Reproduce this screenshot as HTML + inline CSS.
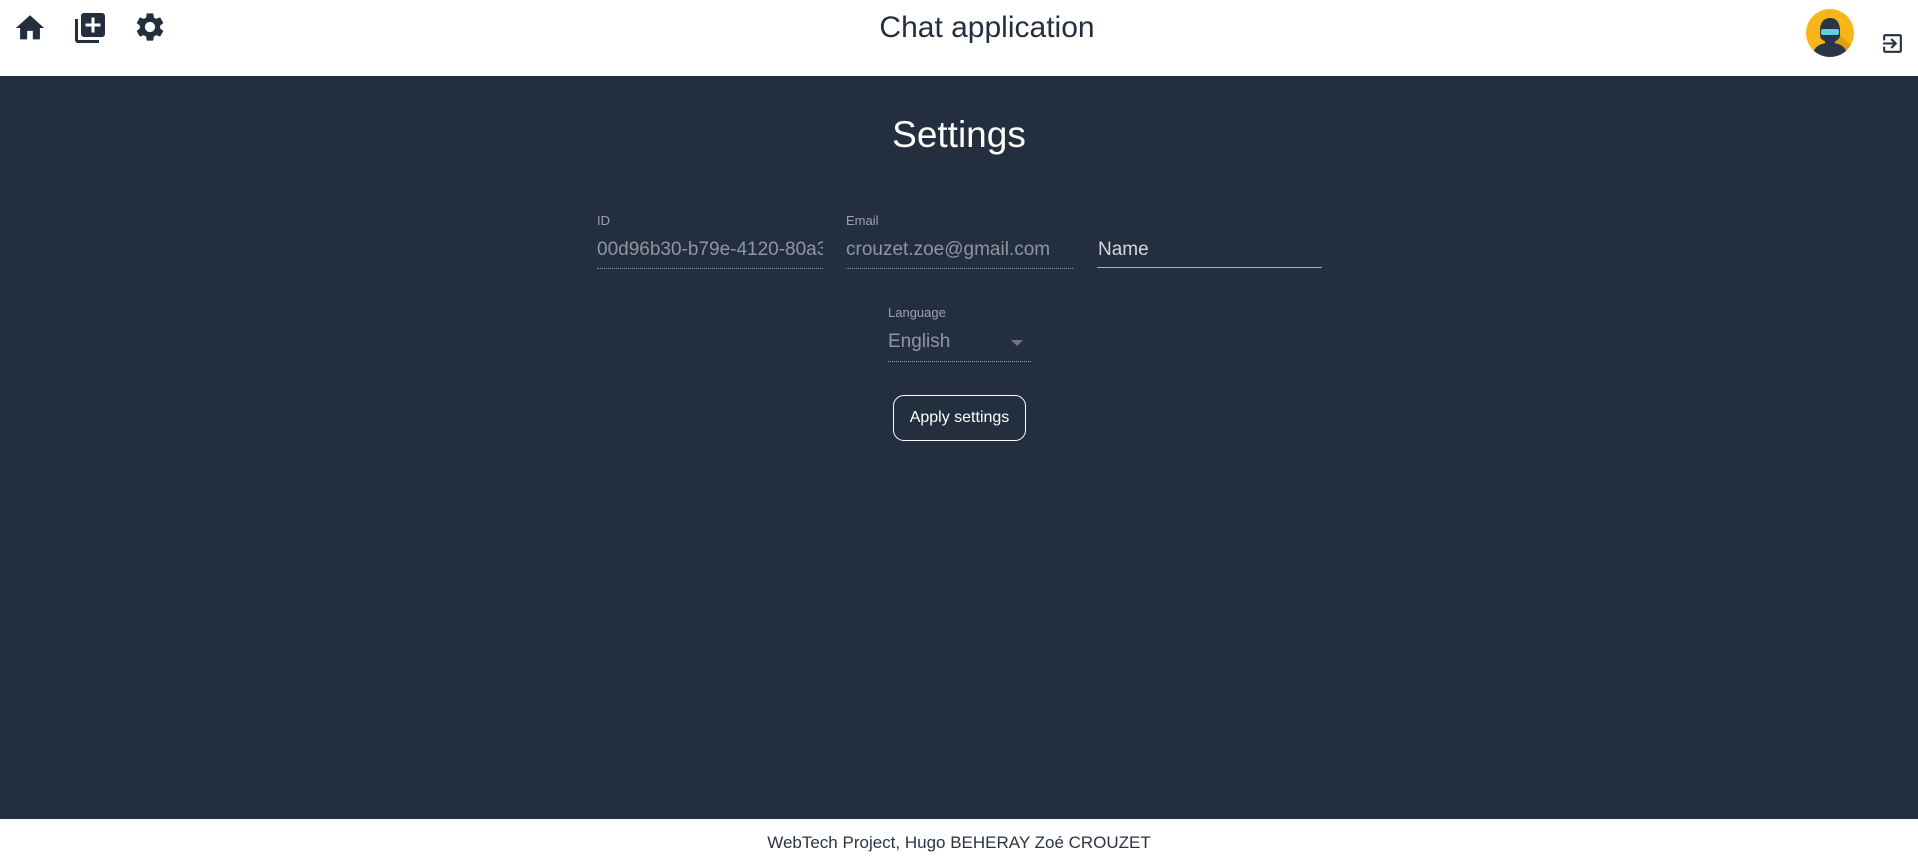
<!DOCTYPE html>
<html><head><meta charset="utf-8">
<style>
*{margin:0;padding:0;box-sizing:border-box}
html,body{width:1918px;height:858px;overflow:hidden;font-family:"Liberation Sans",sans-serif}
body{background:#232f3f;position:relative}
.header{position:absolute;left:0;top:0;width:1918px;height:76px;background:#fff}
.footer{position:absolute;left:0;top:819px;width:1918px;height:39px;background:#fff;text-align:center;font-size:17px;color:#2a3442;line-height:39px;padding-top:4px}
.title{position:absolute;left:0;width:100%;top:11px;text-align:center;font-size:30px;color:#232f3f;padding-left:56px}
.abs{position:absolute}
.lbl{position:absolute;font-size:13px;color:#9aa2ad}
.val{position:absolute;font-size:19px;color:#8e96a1;white-space:nowrap;overflow:hidden}
.ul{position:absolute;height:0;border-bottom:1px dotted #8e96a1}
</style></head><body>
<div class="header">
  <svg class="abs" style="left:13px;top:11px" width="34" height="34" viewBox="0 0 24 24"><path fill="#232f3f" d="M10 20v-6h4v6h5v-8h3L12 3 2 12h3v8z"/></svg>
  <svg class="abs" style="left:72px;top:10px" width="36" height="36" viewBox="0 0 24 24"><path fill="#232f3f" d="M4 6H2v14c0 1.1.9 2 2 2h14v-2H4V6zm16-4H8c-1.1 0-2 .9-2 2v12c0 1.1.9 2 2 2h12c1.1 0 2-.9 2-2V4c0-1.1-.9-2-2-2zm-1 9h-4v4h-2v-4H9V9h4V5h2v4h4v2z"/></svg>
  <svg class="abs" style="left:133px;top:10px" width="34" height="34" viewBox="0 0 24 24"><path fill="#232f3f" d="M19.14 12.94c.04-.3.06-.61.06-.94 0-.32-.02-.64-.07-.94l2.030-1.58a.49.49 0 0 0 .12-.61l-1.92-3.32a.488.488 0 0 0-.59-.22l-2.39.96c-.5-.38-1.03-.7-1.62-.94l-.36-2.54a.484.484 0 0 0-.48-.41h-3.84c-.24 0-.43.17-.47.41l-.36 2.54c-.59.24-1.13.57-1.62.94l-2.39-.96c-.22-.08-.47 0-.59.22L2.74 8.87c-.12.21-.08.47.12.61l2.03 1.58c-.05.3-.09.63-.09.94s.02.64.07.94l-2.03 1.58a.49.49 0 0 0-.12.61l1.92 3.32c.12.22.37.29.59.22l2.39-.96c.5.38 1.03.7 1.62.94l.36 2.54c.05.24.24.41.48.41h3.84c.24 0 .44-.17.47-.41l.36-2.54c.59-.24 1.13-.56 1.62-.94l2.39.96c.22.08.47 0 .59-.22l1.92-3.32c.12-.22.07-.47-.12-.61l-2.01-1.58zM12 15.6c-1.98 0-3.6-1.620-3.6-3.6s1.62-3.6 3.6-3.6 3.6 1.62 3.6 3.6-1.62 3.6-3.6 3.6z"/></svg>
  <div class="title">Chat application</div>
  <svg class="abs" style="left:1806px;top:9px" width="48" height="48" viewBox="0 0 48 48">
    <defs><clipPath id="c"><circle cx="24" cy="24" r="24"/></clipPath></defs>
    <circle cx="24" cy="24" r="24" fill="#f6b619"/>
    <g clip-path="url(#c)">
      <path d="M26 18 L48 40 L48 48 L32 48 Z" fill="#e39e12"/>
      <path d="M7 48 C7 38 13 34 24 34 C35 34 41 38 41 48 Z" fill="#2b3548"/>
      <rect x="19" y="28" width="10" height="8" fill="#2b3548"/>
      <path d="M14 22 C14 13 18 9 24 9 C30 9 34 13 34 22 L34 26 C34 31 29 33 24 33 C19 33 14 31 14 26 Z" fill="#2b3548"/>
      <rect x="15" y="20" width="18" height="6" rx="2" fill="#5fd0e0"/>
    </g>
  </svg>
  <svg class="abs" style="left:1880px;top:31px" width="25" height="25" viewBox="0 0 24 24"><path fill="#232f3f" d="M10.09 15.59 11.5 17l5-5-5-5-1.41 1.41L12.67 11H3v2h9.67l-2.58 2.59zM19 3H5c-1.11 0-2 .9-2 2v4h2V5h14v14H5v-4H3v4c0 1.1.89 2 2 2h14c1.1 0 2-.9 2-2V5c0-1.1-.9-2-2-2z"/></svg>
</div>

<div class="abs" style="left:0;width:1918px;top:114px;text-align:center;font-size:37px;color:#fff">Settings</div>

<div class="lbl" style="left:597px;top:213px">ID</div>
<div class="val" style="left:597px;top:239px;width:226px">00d96b30-b79e-4120-80a3</div>
<div class="ul" style="left:597px;top:268px;width:226px"></div>

<div class="lbl" style="left:846px;top:213px">Email</div>
<div class="val" style="left:846px;top:239px;width:227px">crouzet.zoe@gmail.com</div>
<div class="ul" style="left:846px;top:268px;width:227px"></div>

<div class="val" style="left:1098px;top:239px;color:#d4d8de">Name</div>
<div class="abs" style="left:1097px;top:267px;width:225px;height:1px;background:#aab1bb"></div>

<div class="lbl" style="left:888px;top:305px">Language</div>
<div class="val" style="left:888px;top:331px;color:#8e96a1">English</div>
<div class="abs" style="left:1011px;top:340px;width:0;height:0;border-left:6px solid transparent;border-right:6px solid transparent;border-top:6px solid #6d7682"></div>
<div class="ul" style="left:888px;top:361px;width:143px"></div>

<div class="abs" style="left:893px;top:395px;width:133px;height:46px;border:1px solid #fff;border-radius:11px;color:#fff;font-size:16px;text-align:center;line-height:44px">Apply settings</div>

<div class="footer">WebTech Project, Hugo BEHERAY Zoé CROUZET</div>
</body></html>
